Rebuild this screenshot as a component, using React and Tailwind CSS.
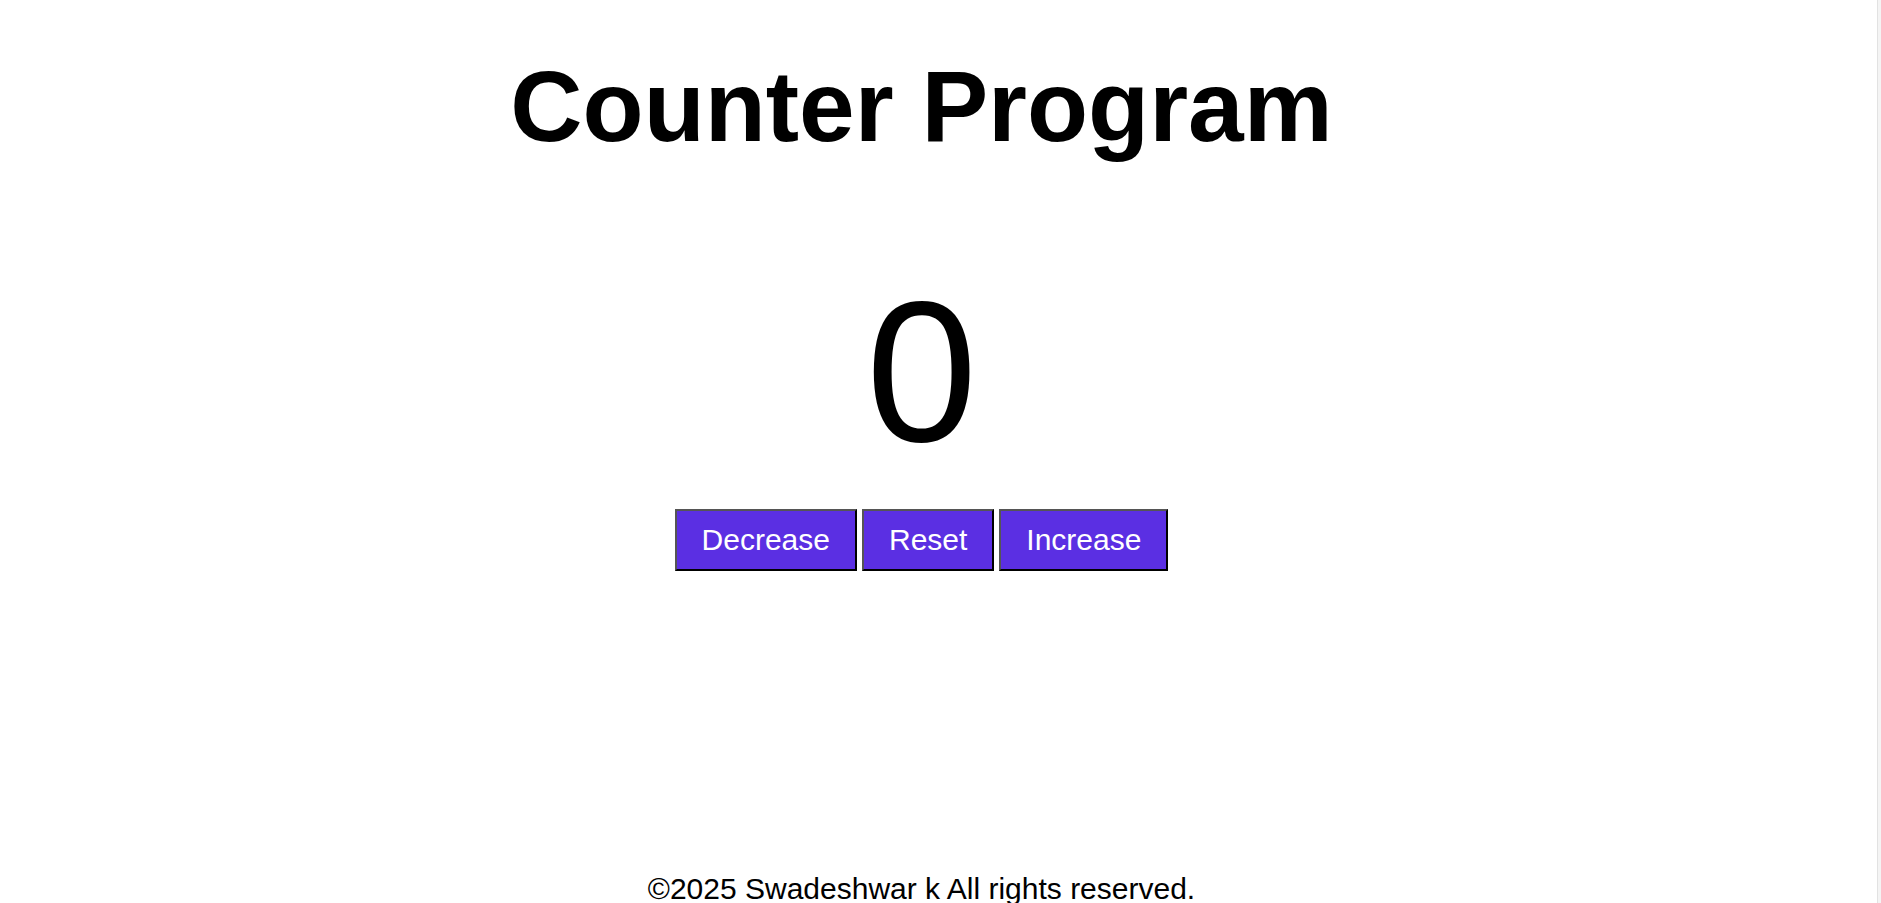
import React, { useState } from 'react';

const btn =
  "bg-[#5b2fe3] text-white text-[30px] leading-[normal] px-[25px] py-[12px] border-2 border-t-[#555555] border-l-[#555555] border-r-black border-b-black cursor-pointer";

const App = () => {
  const [count, setCount] = useState(0);

  return (
    <div className="flex h-[903px] overflow-hidden bg-white font-['Liberation_Sans',Arial,sans-serif] leading-[normal] text-black">
      <div className="w-[1843px] flex flex-col items-center">
        <h1 className="mt-[49px] text-[100px] leading-[normal] font-bold">Counter Program</h1>

        <p className="mt-[93px] text-[200px] leading-[normal]">{count}</p>

        <div className="mt-[22px] flex gap-[5px]">
          <button className={btn} onClick={() => setCount(c => c - 1)}>Decrease</button>
          <button className={btn} onClick={() => setCount(0)}>Reset</button>
          <button className={btn} onClick={() => setCount(c => c + 1)}>Increase</button>
        </div>

        <footer className="mt-[301px] text-[30px] leading-[normal]">
          <p>&copy;2025 Swadeshwar k All rights reserved.</p>
        </footer>
      </div>
      <div className="flex-1" />
      <div className="w-[4px] border-l border-[#e2e2e2] bg-[#f4f4f4]" />
    </div>
  );
};

export default App;
